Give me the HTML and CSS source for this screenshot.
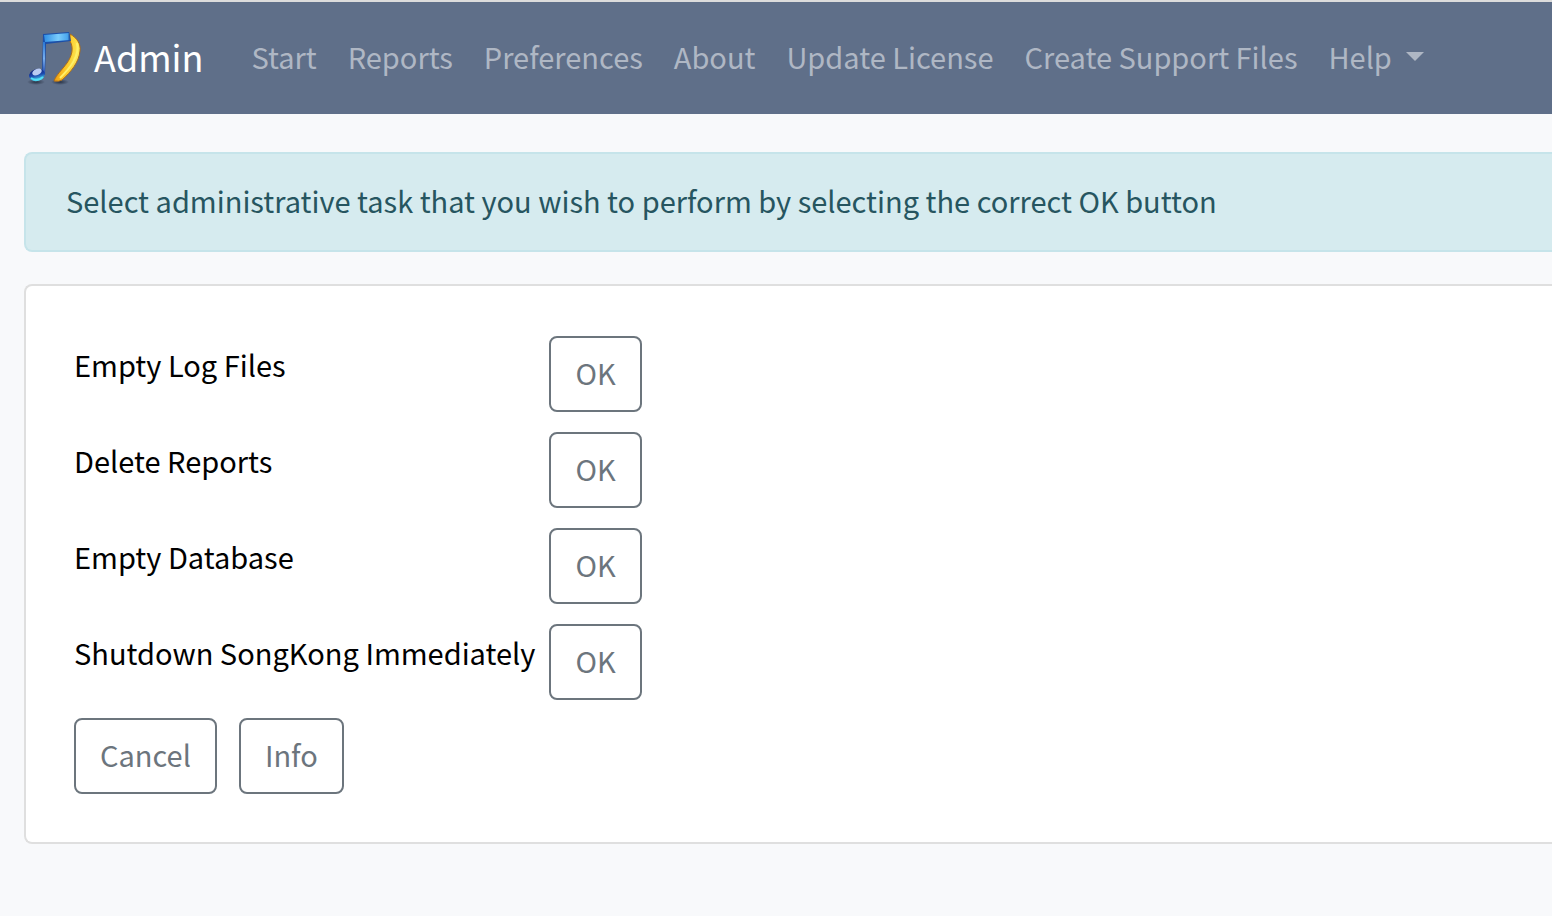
FILE: index.html
```html
<!DOCTYPE html>
<html lang="en">
<head>
    <meta charset="UTF-8">
    <meta name="viewport" content="width=device-width, initial-scale=1">
    <title>Admin</title>
    <link rel="stylesheet" href="styles.css">
</head>
<body>
    <nav class="navbar">
        <a class="navbar-brand" href="#">
            <svg class="logo" viewBox="0 0 60 60" aria-hidden="true">
                <defs>
                    <linearGradient id="beam" x1="0" y1="0" x2="1" y2="0">
                        <stop offset="0" stop-color="#2f8ee4"/>
                        <stop offset="0.55" stop-color="#7accfb"/>
                        <stop offset="0.9" stop-color="#4aa6ee"/>
                        <stop offset="1" stop-color="#1c4c96"/>
                    </linearGradient>
                    <linearGradient id="stem" x1="0" y1="0" x2="0" y2="1">
                        <stop offset="0" stop-color="#2a78d4"/>
                        <stop offset="0.5" stop-color="#76aef0"/>
                        <stop offset="1" stop-color="#1a3fa4"/>
                    </linearGradient>
                    <linearGradient id="head" x1="0" y1="0" x2="0" y2="1">
                        <stop offset="0" stop-color="#0d1c74"/>
                        <stop offset="0.5" stop-color="#1b48ae"/>
                        <stop offset="1" stop-color="#4fe0f4"/>
                    </linearGradient>
                    <linearGradient id="curve" x1="0" y1="0.3" x2="1" y2="0.5">
                        <stop offset="0" stop-color="#e88a0a"/>
                        <stop offset="0.5" stop-color="#fbc827"/>
                        <stop offset="1" stop-color="#ffec5c"/>
                    </linearGradient>
                    <radialGradient id="shade">
                        <stop offset="0" stop-color="#1c2537" stop-opacity="0.8"/>
                        <stop offset="1" stop-color="#1c2537" stop-opacity="0"/>
                    </radialGradient>
                </defs>
                <ellipse cx="12" cy="54" rx="9" ry="3" fill="url(#shade)"/>
                <ellipse cx="36" cy="54" rx="9" ry="3" fill="url(#shade)"/>
                <path d="M46 6C53 10 57 16 56 23C55 34 47 44 38 52Q35 54 30 53C32 47 38 42 43 35C48 28 50 20 46 13Z" fill="url(#curve)" stroke="#ad6d1c" stroke-width="1"/>
                <path d="M53 15C56 28 46 40 36 50" fill="none" stroke="#fff06a" stroke-width="2"/>
                <path d="M19 6L45 4L47 13L22 16L21 47L18 47Z" fill="#1c4fa8"/>
                <path d="M20 7L45 5L46 12L21 14Z" fill="url(#beam)"/>
                <path d="M19 14H21V47H19Z" fill="url(#stem)"/>
                <ellipse cx="13" cy="47" rx="8" ry="6" transform="rotate(-14 13 47)" fill="url(#head)"/>
                <ellipse cx="13" cy="44" rx="5" ry="3" transform="rotate(-24 13 44)" fill="#b9cbf2"/>
                <path d="M7 50Q13 54 19 49" fill="none" stroke="#52dff5" stroke-width="2"/>
            </svg>
            <span class="brand-text">Admin</span>
        </a>
        <ul class="navbar-nav">
            <li><a class="nav-link" href="#">Start</a></li>
            <li><a class="nav-link" href="#">Reports</a></li>
            <li><a class="nav-link" href="#">Preferences</a></li>
            <li><a class="nav-link" href="#">About</a></li>
            <li><a class="nav-link" href="#">Update License</a></li>
            <li><a class="nav-link" href="#">Create Support Files</a></li>
            <li><a class="nav-link dropdown-toggle" href="#">Help</a></li>
        </ul>
    </nav>

    <main class="content">
        <div class="alert">Select administrative task that you wish to perform by selecting the correct OK button</div>

        <form class="card">
            <div class="tasks">
                <label for="emptyLogs">Empty Log Files</label>
                <button type="button" class="btn" id="emptyLogs">OK</button>

                <label for="deleteReports">Delete Reports</label>
                <button type="button" class="btn" id="deleteReports">OK</button>

                <label for="emptyDatabase">Empty Database</label>
                <button type="button" class="btn" id="emptyDatabase">OK</button>

                <label for="shutdown">Shutdown SongKong Immediately</label>
                <button type="button" class="btn" id="shutdown">OK</button>
            </div>
            <div class="actions">
                <button type="button" class="btn">Cancel</button>
                <button type="button" class="btn">Info</button>
            </div>
        </form>
    </main>
</body>
</html>
```

FILE: styles.css
```css
* {
    box-sizing: border-box;
}
body {
    margin: 0;
    font-family: "Noto Sans CJK SC", "Noto Sans", sans-serif;
    font-size: 29px;
    line-height: 48px;
    color: #000;
    background-color: #f8f9fb;
}

/* Top navigation */
.navbar {
    display: flex;
    align-items: center;
    padding: 16px 24px;
    border-top: 2px solid #dcdcdc;
    background-color: #5f6f89;
}
.navbar-brand {
    display: flex;
    align-items: center;
    gap: 10px;
    height: 80px;
    margin-right: 32px;
    font-size: 36px;
    color: #fff;
    text-decoration: none;
}
.brand-text {
    padding-bottom: 4px;
}
.logo {
    width: 60px;
    height: 60px;
}
.navbar-nav {
    display: flex;
    margin: 0;
    padding: 0;
    list-style: none;
}
.nav-link {
    display: block;
    padding: 14px 15px 18px 16px;
    color: #afb7c4;
    text-decoration: none;
    white-space: nowrap;
}
.nav-link:hover {
    color: #fff;
}
.dropdown-toggle::after {
    content: "";
    display: inline-block;
    margin-left: 14px;
    vertical-align: 8px;
    border-top: 9px solid;
    border-right: 9px solid transparent;
    border-left: 9px solid transparent;
}

/* Page content, runs to the right edge of the window */
.content {
    padding: 38px 0 32px 24px;
}
.alert {
    margin-bottom: 32px;
    padding: 22px 40px 26px;
    border: 2px solid #c6e4ea;
    border-right: 0;
    border-radius: 8px 0 0 8px;
    color: #265560;
    background-color: #d6ebef;
}
.card {
    padding: 50px 48px 48px;
    border: 2px solid #dfdfdf;
    border-right: 0;
    border-radius: 8px 0 0 8px;
    background-color: #fff;
}
.tasks {
    display: grid;
    grid-template-columns: max-content max-content;
    gap: 20px 14px;
}
.tasks label {
    padding-top: 4px;
}
.actions {
    display: flex;
    gap: 22px;
    margin-top: 18px;
}

/* Buttons */
.btn {
    padding: 10px 24px 14px;
    border: 2px solid #6c757d;
    border-radius: 8px;
    font: inherit;
    color: #6c757d;
    background-color: transparent;
    cursor: pointer;
}
.btn:hover {
    color: #fff;
    background-color: #6c757d;
}
```
